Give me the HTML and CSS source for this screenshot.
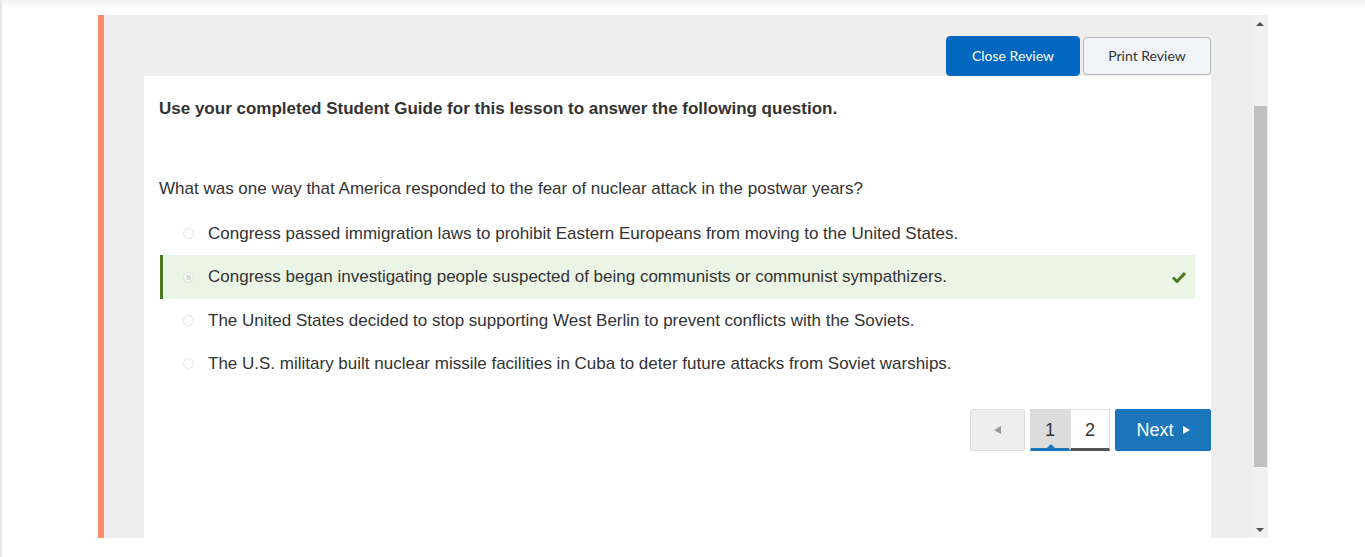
FILE: index.html
```html
<!DOCTYPE html>
<html>
<head>
<meta charset="utf-8">
<link rel="stylesheet" href="styles.css">
</head>
<body>
<div class="page">
  <div class="topshade"></div>
  <div class="frame">
    <div class="accent"></div>
    <div class="scroller">
      <div class="toolbar">
        <button class="btn btn-primary">Close Review</button>
        <button class="btn btn-secondary">Print Review</button>
      </div>
      <div class="card">
        <p class="lead">Use your completed Student Guide for this lesson to answer the following question.</p>
        <p class="question">What was one way that America responded to the fear of nuclear attack in the postwar years?</p>
        <ul class="options">
          <li class="option"><span class="radio"></span><span class="otext">Congress passed immigration laws to prohibit Eastern Europeans from moving to the United States.</span></li>
          <li class="option correct"><span class="radio checked"></span><span class="otext">Congress began investigating people suspected of being communists or communist sympathizers.</span>
            <svg class="check" width="14" height="12" viewBox="0 0 14 12"><path d="M1 6.5 L5 10.5 L13 2" fill="none" stroke="#4a7a1f" stroke-width="3"/></svg>
          </li>
          <li class="option"><span class="radio"></span><span class="otext">The United States decided to stop supporting West Berlin to prevent conflicts with the Soviets.</span></li>
          <li class="option"><span class="radio"></span><span class="otext">The U.S. military built nuclear missile facilities in Cuba to deter future attacks from Soviet warships.</span></li>
        </ul>
        <div class="pager">
          <button class="pbtn prev"><span class="tri-left"></span></button>
          <div class="pages">
            <span class="pg active">1</span>
            <span class="pg">2</span>
          </div>
          <button class="pbtn next">Next <span class="tri-right"></span></button>
        </div>
      </div>
    </div>
    <div class="scrollbar">
      <div class="arrow up"></div>
      <div class="track"><div class="thumb"></div></div>
      <div class="arrow down"></div>
    </div>
  </div>
</div>
</body>
</html>
```
FILE: styles.css
```css
html, body {
  margin: 0;
  padding: 0;
  background: #fff;
  font-family: "Liberation Sans", Arial, sans-serif;
}
.page {
  position: relative;
  height: 557px;
  border-left: 2px solid #e8e8e8;
  box-sizing: border-box;
  padding-top: 15px;
  overflow: hidden;
}
.topshade {
  position: absolute;
  left: 0; right: 0; top: 0;
  height: 8px;
  background: linear-gradient(#f3f3f3, #fff);
}
.frame {
  position: relative;
  margin-left: 96px;
  width: 1170px;
  height: 523px;
  display: flex;
}
.accent {
  width: 6px;
  background: #fa8c6c;
  flex: none;
}
.scroller {
  width: 1148px;
  background: #eeeeee;
  padding: 21px 41px 0 40px;
  box-sizing: border-box;
  display: flex;
  flex-direction: column;
}
.toolbar {
  display: flex;
  justify-content: flex-end;
  align-items: center;
  gap: 3px;
  height: 40px;
}
.btn {
  font-family: Lato, "Liberation Sans", sans-serif;
  font-size: 14px;
  border-radius: 4px;
  cursor: pointer;
  padding-bottom: 2px;
}
.btn-primary {
  background: #0067c0;
  color: #fff;
  border: 1px solid #0067c0;
  width: 134px;
  height: 40px;
}
.btn-secondary {
  background: #f0f4f9;
  color: #333;
  border: 1px solid #b8b8b8;
  width: 128px;
  height: 38px;
}
.card {
  background: #fff;
  flex: 1;
  padding: 24px 16px 0 15px;
}
.lead {
  margin: 0;
  font-weight: bold;
  font-size: 17px;
  line-height: 18px;
  color: #333;
}
.question {
  margin: 62px 0 0 0;
  font-size: 17px;
  line-height: 18px;
  color: #333;
}
.options {
  list-style: none;
  margin: 14px 0 0 1px;
  padding: 0;
}
.option {
  display: flex;
  align-items: center;
  height: 43px;
  padding-left: 20px;
  font-size: 17px;
  color: #333;
  border-left: 3px solid transparent;
  position: relative;
}
.option.correct {
  background: #ebf5e6;
  border-left-color: #4a7a1f;
  height: 44px;
}
.radio {
  width: 11px;
  height: 11px;
  border-radius: 50%;
  border: 1px solid #e4e4e4;
  background: #fff;
  box-sizing: border-box;
  margin-right: 14px;
  flex: none;
}
.radio.checked {
  border-color: #dfe6dc;
  background: radial-gradient(circle, #d8ddd6 0 2.5px, #f4f7f2 3px);
}
.check {
  position: absolute;
  right: 9px;
  top: 16px;
}
.pager {
  display: flex;
  justify-content: flex-end;
  margin: 24px -16px 0 0;
  gap: 5px;
}
.pbtn {
  height: 42px;
  border-radius: 2px;
  font-family: "Liberation Sans", Arial, sans-serif;
  cursor: pointer;
}
.prev {
  width: 55px;
  background: #eeeeee;
  border: 1px solid #dedede;
  display: flex;
  align-items: center;
  justify-content: center;
}
.tri-left {
  width: 0; height: 0;
  border-top: 4px solid transparent;
  border-bottom: 4px solid transparent;
  border-right: 7px solid #999;
}
.tri-right {
  display: inline-block;
  width: 0; height: 0;
  border-top: 4px solid transparent;
  border-bottom: 4px solid transparent;
  border-left: 7px solid #fff;
  margin-left: 4px;
  vertical-align: 2px;
}
.pages {
  display: flex;
  height: 42px;
}
.pg {
  position: relative;
  width: 40px;
  height: 42px;
  box-sizing: border-box;
  display: flex;
  align-items: center;
  justify-content: center;
  font-size: 18px;
  color: #333;
  border: 1px solid #e0e0e0;
  border-bottom: 3px solid #555;
  padding-top: 2px;
}
.pg.active {
  background: #dcdcdc;
  border-color: #dcdcdc;
  border-bottom-color: #1b75bb;
}
.pg.active::after {
  content: "";
  position: absolute;
  left: 16px;
  bottom: 0;
  border-left: 4px solid transparent;
  border-right: 4px solid transparent;
  border-bottom: 4px solid #1b75bb;
}
.next {
  width: 96px;
  background: #1b75bb;
  color: #fff;
  border: 1px solid #1b75bb;
  font-size: 18px;
}
.scrollbar {
  width: 16px;
  background: #f1f1f1;
  display: flex;
  flex-direction: column;
  flex: none;
}
.arrow {
  height: 17px;
  display: flex;
  align-items: center;
  justify-content: center;
}
.arrow.up::before {
  content: "";
  border-left: 4px solid transparent;
  border-right: 4px solid transparent;
  border-bottom: 4px solid #505050;
}
.arrow.down::before {
  content: "";
  border-left: 4px solid transparent;
  border-right: 4px solid transparent;
  border-top: 4px solid #505050;
}
.track {
  flex: 1;
  padding: 74px 1px 0 2px;
}
.thumb {
  height: 361px;
  background: #c1c1c1;
}
```
